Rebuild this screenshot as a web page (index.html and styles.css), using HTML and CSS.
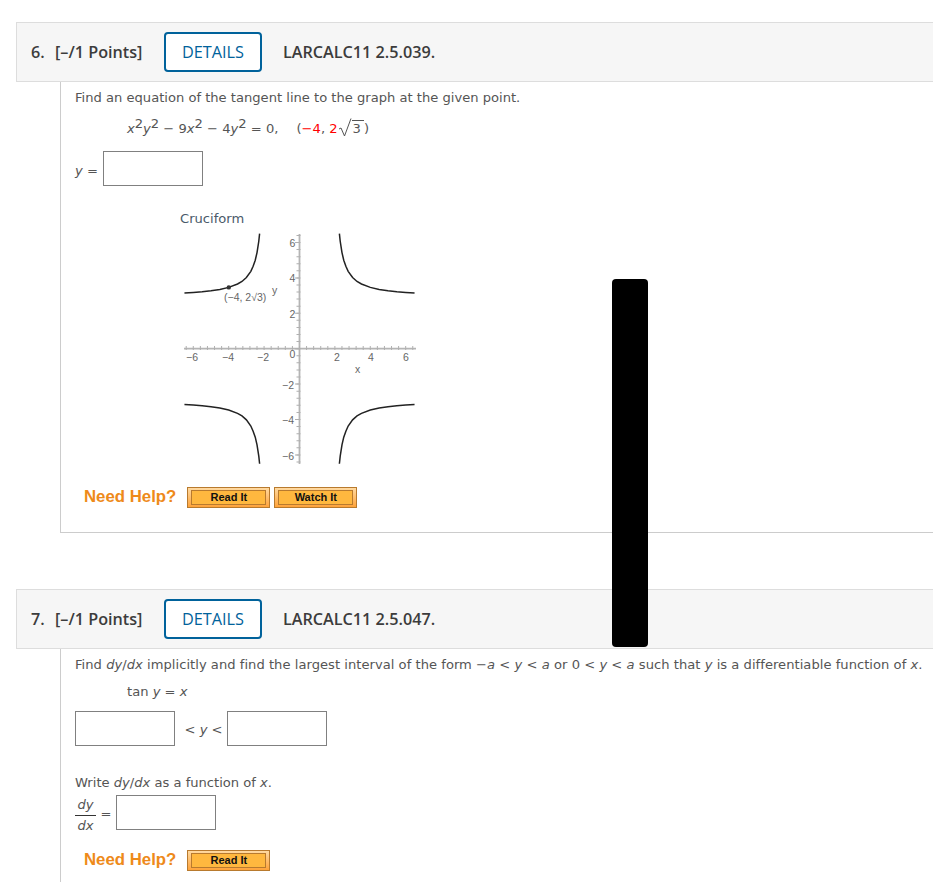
FILE: index.html
```html
<!DOCTYPE html>
<html lang="en">
<head>
<meta charset="utf-8">
<title>Questions</title>
<link rel="stylesheet" href="styles.css">
</head>
<body>
<svg class="defs" width="0" height="0" aria-hidden="true">
  <defs>
    <polyline id="branch" points="2.254,6.5 2.3,6.07 2.4,5.43 2.5,5 2.62,4.66 2.75,4.37 3,4.02 3.25,3.8 3.5,3.656 4,3.464 4.5,3.349 5,3.273 5.5,3.22 6,3.182 6.5,3.153"/>
  </defs>
</svg>
<main class="page">
  <section class="question first">
    <header class="qhead">
      <span class="qnum">6.</span>
      <span class="qpts">[–/1 Points]</span>
      <button class="details">DETAILS</button>
      <span class="qref">LARCALC11 2.5.039.</span>
    </header>
    <div class="qbody q6">
      <p class="prompt">Find an equation of the tangent line to the graph at the given point.</p>
      <p class="eq eq6"><i>x</i><sup>2</sup><i>y</i><sup>2</sup> − 9<i>x</i><sup>2</sup> − 4<i>y</i><sup>2</sup> = 0,<span class="pt">(<b class="red">−4</b>, <b class="red">2</b><span class="sqrt"><svg class="radical" width="14" height="19" viewBox="0 0 14 19"><path d="M1 11 L3 10 L6.5 18 L13 0.5"/></svg><span class="rad">3</span></span>)</span></p>
      <div class="answer yrow"><span class="mlabel"><i>y</i> =</span><span class="box"></span></div>
      <div class="figure">
        <div class="figtitle">Cruciform</div>
        <svg class="graph" width="240" height="240" viewBox="0 0 240 240">
          <g class="axes">
            <line x1="4" y1="122.7" x2="236" y2="122.7"/>
            <line x1="119.5" y1="8" x2="119.5" y2="238"/>
          </g>
          <g class="ticks">
            <line x1="5.7" y1="122" x2="236" y2="122"/>
            <line x1="118.5" y1="8.9" x2="118.5" y2="238"/>
          </g>
          <g class="majors">
            <line x1="117" y1="16" x2="117" y2="238"/>
          </g>
          <g transform="translate(119.5 122.7) scale(17.7 -17.7)" class="curves">
            <use href="#branch"/>
            <use href="#branch" transform="scale(-1 1)"/>
            <use href="#branch" transform="scale(1 -1)"/>
            <use href="#branch" transform="scale(-1 -1)"/>
          </g>
          <circle cx="48.8" cy="61.4" r="2.2" class="dot"/>
          <g class="labels">
            <text x="44" y="75">(−4, 2√3)</text>
            <text x="92" y="68">y</text>
            <text x="109.5" y="20.5">6</text>
            <text x="109.5" y="56">4</text>
            <text x="109.5" y="91.5">2</text>
            <text x="109.5" y="131.5">0</text>
            <text x="102" y="162.5">−2</text>
            <text x="102" y="197.5">−4</text>
            <text x="102" y="233.5">−6</text>
            <text x="6" y="134.5">−6</text>
            <text x="42" y="134.5">−4</text>
            <text x="77" y="134.5">−2</text>
            <text x="154" y="134.5">2</text>
            <text x="188" y="134.5">4</text>
            <text x="223" y="134.5">6</text>
            <text x="175" y="147">x</text>
          </g>
        </svg>
      </div>
      <div class="help help6">
        <span class="needhelp">Need Help?</span>
        <span class="hbtn"><span class="hbtn-in">Read It</span></span>
        <span class="hbtn"><span class="hbtn-in">Watch It</span></span>
      </div>
    </div>
  </section>
  <section class="question second">
    <header class="qhead">
      <span class="qnum">7.</span>
      <span class="qpts">[–/1 Points]</span>
      <button class="details">DETAILS</button>
      <span class="qref">LARCALC11 2.5.047.</span>
    </header>
    <div class="qbody q7">
      <p class="prompt">Find <i>dy</i>/<i>dx</i> implicitly and find the largest interval of the form −<i>a</i> &lt; <i>y</i> &lt; <i>a</i> or 0 &lt; <i>y</i> &lt; <i>a</i> such that <i>y</i> is a differentiable function of <i>x</i>.</p>
      <p class="eq eq7">tan <i>y</i> = <i>x</i></p>
      <div class="answer interval"><span class="box"></span><span class="mlabel between">&lt; <i>y</i> &lt;</span><span class="box"></span></div>
      <p class="prompt write">Write <i>dy</i>/<i>dx</i> as a function of <i>x</i>.</p>
      <div class="answer deriv">
        <span class="frac"><span class="num"><i>dy</i></span><span class="den"><i>dx</i></span></span>
        <span class="mlabel eqsign">=</span>
        <span class="box"></span>
      </div>
      <div class="help help7">
        <span class="needhelp">Need Help?</span>
        <span class="hbtn"><span class="hbtn-in">Read It</span></span>
      </div>
    </div>
  </section>
</main>
<div class="redact"></div>
</body>
</html>
```
FILE: styles.css
```css
html, body { margin: 0; padding: 0; background: #fff; }
body { width: 933px; height: 882px; overflow: hidden; position: relative; font-family: "DejaVu Sans", Verdana, sans-serif; font-size: 13.1px; color: #555; }
.defs { position: absolute; }
.page { padding: 22px 0 0 16px; }
.question.second { margin-top: 56px; }
.qhead { box-sizing: border-box; height: 60px; background: #f6f6f6; border: 1px solid #ddd; border-right: 0; display: flex; align-items: center; font-family: "Open Sans", sans-serif; font-weight: 600; font-size: 16.2px; color: #3c3c3c; }
.qnum { margin-left: 14px; width: 24px; }
.qpts { width: 109px; }
.details { box-sizing: border-box; width: 98px; height: 40px; background: #fff; border: 2px solid #00629b; border-radius: 4px; color: #00629b; font: 400 16.3px "Open Sans", sans-serif; padding: 0; }
.qref { margin-left: 21px; }
.qbody { margin-left: 44px; border-left: 1px solid #ccc; padding-left: 14px; }
.q6 { box-sizing: border-box; height: 451px; border-bottom: 1px solid #ccc; }
.q7 { height: 300px; }
p { margin: 0; }
i { font-style: italic; }
.prompt { line-height: 16px; white-space: nowrap; color: #555; }
.q6 > .prompt { padding-top: 8px; }
.q7 > .prompt:first-child { padding-top: 8px; letter-spacing: 0.03px; }
.eq { margin-left: 52px; white-space: nowrap; line-height: 18px; }
.eq sup { font-size: 13.1px; line-height: 0; vertical-align: 5px; }
.eq6 { margin-top: 14px; height: 22px; }
.eq7 { margin-top: 10px; }
.pt { margin-left: 18px; }
.red { color: #f00; font-weight: 400; }
.sqrt { display: inline-block; position: relative; padding-left: 14px; }
.radical { position: absolute; left: 0; top: -2px; fill: none; stroke: #555; stroke-width: 1; }
.rad { display: inline-block; border-top: 1px solid #555; padding: 0 3px 0 1px; line-height: 16px; margin-top: -1px; }
.answer { display: flex; align-items: center; }
.box { box-sizing: border-box; display: block; width: 100px; height: 35px; background: #fff; border: 1px solid #808080; flex: none; }
.mlabel { white-space: nowrap; }
.yrow { margin-top: 9px; }
.yrow .mlabel { width: 28px; padding-top: 3px; }
.figure { margin: 23px 0 0 105px; width: 240px; position: relative; }
.figtitle { line-height: 16px; color: #4a5a6a; padding-top: 2px; }
.graph { display: block; margin: -1px 0 0 0; }
.axes line { stroke: #b5b5b5; stroke-width: 1.8; }
.ticks line { stroke: #b0b0b0; stroke-width: 4; stroke-dasharray: 1 6.08; }
.majors line { stroke: #b0b0b0; stroke-width: 4; stroke-dasharray: 1 34.4; }
.curves { fill: none; stroke: #222; stroke-width: 0.085; }
.curves polyline { stroke-linejoin: round; }
.dot { fill: #333; }
.labels text { font-family: "Liberation Sans", Arial, sans-serif; font-size: 10.5px; fill: #666; }
.help { display: flex; align-items: flex-start; gap: 4px; margin-left: 9px; }
.help6 { margin-top: 21px; }
.needhelp { font: 700 16.8px/19px "Liberation Sans", Arial, sans-serif; color: #ee8a1a; margin-right: 7px; white-space: nowrap; }
.hbtn { box-sizing: border-box; width: 83px; height: 21px; border: 1px solid #b87a2e; background: linear-gradient(#ffd9a0, #ffa33a); padding: 2px 3px; display: block; }
.hbtn-in { box-sizing: border-box; display: block; height: 15px; border: 1px solid #b87a2e; background: #ffb83f; color: #111; font: 700 11px/13px "Liberation Sans", Arial, sans-serif; text-align: center; }
.interval { margin-top: 10px; }
.between { box-sizing: border-box; width: 52px; text-align: center; padding: 2px 0 0 5px; }
.write { margin-top: 29px; }
.deriv { margin-top: 4px; align-items: flex-start; }
.frac { display: flex; flex-direction: column; align-items: center; width: 21px; line-height: 16px; margin-top: 2px; }
.num { border-bottom: 1px solid #333; width: 21px; text-align: center; padding-bottom: 2px; }
.den { padding-top: 2px; }
.eqsign { width: 20px; text-align: center; margin-top: 11px; line-height: 16px; }
.help7 { margin-top: 16px; }
.redact { position: absolute; left: 612px; top: 279px; width: 36px; height: 368px; background: #000; border-radius: 4px; }
```
